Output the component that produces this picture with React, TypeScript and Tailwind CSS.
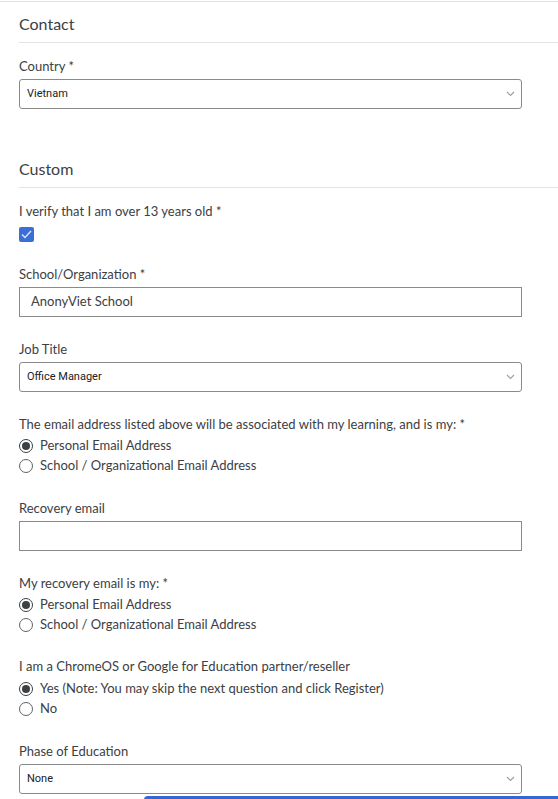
import React from 'react';

const font = { fontFamily: 'Lato, Roboto, "Noto Sans", Arial, sans-serif' };

const Chevron = () => (
  <svg width="9" height="6" viewBox="0 0 9 6" fill="none" className="shrink-0">
    <polyline points="1,1 4.5,4.5 8,1" stroke="#9aa0a6" strokeWidth="1.2" />
  </svg>
);

const Label = ({ children, className = '' }: { children: React.ReactNode; className?: string }) => (
  <div className={`h-[18px] leading-[18px] text-[13px] text-[#3c4043] ${className}`}>{children}</div>
);

const Select = ({ value, className = '' }: { value: string; className?: string }) => (
  <div
    className={`w-[503px] h-[30px] border border-[#8a8a8a] rounded-[3px] flex items-center justify-between pl-[7px] pr-[6px] ${className}`}
  >
    <span className="text-[11px] text-[#202124]" style={{ fontFamily: 'Roboto, Arial, sans-serif' }}>
      {value}
    </span>
    <Chevron />
  </div>
);

const TextInput = ({ value, className = '' }: { value?: string; className?: string }) => (
  <div className={`w-[503px] h-[30px] border border-[#8a8a8a] flex items-center pl-[11px] ${className}`}>
    <span className="text-[13px] text-[#3c4043]">{value}</span>
  </div>
);

const Radio = ({ label, checked }: { label: string; checked?: boolean }) => (
  <div className="h-[20px] flex items-center gap-[7px]">
    <span
      className={`w-[14px] h-[14px] rounded-full border-[1.5px] flex items-center justify-center ${
        checked ? 'border-[#3c4043]' : 'border-[#5f6368]'
      }`}
    >
      {checked && <span className="w-[8px] h-[8px] rounded-full bg-[#3c4043]" />}
    </span>
    <span className="text-[13px] text-[#3c4043]">{label}</span>
  </div>
);

const Heading = ({ children, className = '' }: { children: React.ReactNode; className?: string }) => (
  <div className={`border-b border-[#e3e3e3] ${className}`}>
    <div className="h-[20px] leading-[20px] text-[16px] text-[#3c4043]">{children}</div>
  </div>
);

export default function App() {
  return (
    <div className="w-[558px] h-[799px] overflow-hidden bg-white" style={font}>
      <div className="mt-px h-px bg-[#e3e3e3]" />
      <div className="pl-[19px]">
        <Heading className="pt-[12px] pb-[8px]">Contact</Heading>

        <Label className="mt-[14px]">Country *</Label>
        <Select value="Vietnam" className="mt-[4px]" />

        <Heading className="mt-[50px] pb-[8px]">Custom</Heading>

        <Label className="mt-[14px]">I verify that I am over 13 years old *</Label>
        <div className="mt-[7px] w-[15px] h-[15px] rounded-[2px] bg-[#3b6fd8] flex items-center justify-center">
          <svg width="11" height="9" viewBox="0 0 11 9" fill="none">
            <polyline points="1,4.5 4,7.5 10,1" stroke="#dfe8fb" strokeWidth="1.3" />
          </svg>
        </div>

        <Label className="mt-[23px]">School/Organization *</Label>
        <TextInput value="AnonyViet School" className="mt-[4px]" />

        <Label className="mt-[23px]">Job Title</Label>
        <Select value="Office Manager" className="mt-[4px]" />

        <Label className="mt-[23px]">
          The email address listed above will be associated with my learning, and is my: *
        </Label>
        <div className="mt-[3px]">
          <Radio label="Personal Email Address" checked />
          <Radio label="School / Organizational Email Address" />
        </div>

        <Label className="mt-[23px]">Recovery email</Label>
        <TextInput className="mt-[4px]" />

        <Label className="mt-[23px]">My recovery email is my: *</Label>
        <div className="mt-[3px]">
          <Radio label="Personal Email Address" checked />
          <Radio label="School / Organizational Email Address" />
        </div>

        <Label className="mt-[22px]">I am a ChromeOS or Google for Education partner/reseller</Label>
        <div className="mt-[4px]">
          <Radio label="Yes (Note: You may skip the next question and click Register)" checked />
          <Radio label="No" />
        </div>

        <Label className="mt-[23px]">Phase of Education</Label>
        <Select value="None" className="mt-[4px]" />

        <div className="mt-[2px] ml-[125px] h-[10px] rounded-tl-[4px] bg-[#3367d6]" />
      </div>
    </div>
  );
}
